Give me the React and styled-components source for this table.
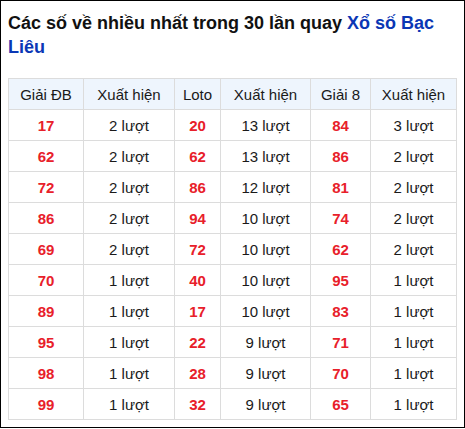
import styled, { createGlobalStyle } from 'styled-components';

const GlobalStyle = createGlobalStyle`
  html, body {
    margin: 0;
    padding: 0;
    background: #fff;
  }
`;

const Box = styled.div`
  box-sizing: border-box;
  width: 465px;
  height: 428px;
  border: 1px solid #000;
  padding: 0 7px;
  font-family: "Liberation Sans", Arial, sans-serif;
`;

const Title = styled.h2`
  margin: 0;
  padding: 10px 0 0;
  font-size: 18px;
  line-height: 24px;
  font-weight: bold;
  color: #111;
  a {
    color: #0b37b5;
    text-decoration: none;
  }
`;

const Table = styled.table`
  width: 100%;
  margin-top: 19px;
  border-collapse: collapse;
  table-layout: fixed;
  font-size: 15px;
  color: #1a1a1a;

  th,
  td {
    border: 1px solid #dcdcdc;
    height: 30px;
    padding: 0;
    text-align: center;
  }
  th {
    background: #eef5fd;
    font-weight: normal;
  }
`;

const Col = styled.col`
  width: ${(p) => p.$w}px;
`;

const Num = styled.td`
  color: #e8202a;
  font-weight: bold;
`;

const widths = [75, 91, 46, 90, 60, 86];
const heads = ['Giải ĐB', 'Xuất hiện', 'Loto', 'Xuất hiện', 'Giải 8', 'Xuất hiện'];

const rows = [
  ['17', '2', '20', '13', '84', '3'],
  ['62', '2', '62', '13', '86', '2'],
  ['72', '2', '86', '12', '81', '2'],
  ['86', '2', '94', '10', '74', '2'],
  ['69', '2', '72', '10', '62', '2'],
  ['70', '1', '40', '10', '95', '1'],
  ['89', '1', '17', '10', '83', '1'],
  ['95', '1', '22', '9', '71', '1'],
  ['98', '1', '28', '9', '70', '1'],
  ['99', '1', '32', '9', '65', '1'],
];

export default function App() {
  return (
    <>
      <GlobalStyle />
      <Box>
        <Title>
          Các số về nhiều nhất trong 30 lần quay <a href="#">Xổ số Bạc Liêu</a>
        </Title>
        <Table>
          <colgroup>
            {widths.map((w, i) => (
              <Col key={i} $w={w} />
            ))}
          </colgroup>
          <thead>
            <tr>
              {heads.map((h, i) => (
                <th key={i}>{h}</th>
              ))}
            </tr>
          </thead>
          <tbody>
            {rows.map((r, i) => (
              <tr key={i}>
                <Num>{r[0]}</Num>
                <td>{r[1]} lượt</td>
                <Num>{r[2]}</Num>
                <td>{r[3]} lượt</td>
                <Num>{r[4]}</Num>
                <td>{r[5]} lượt</td>
              </tr>
            ))}
          </tbody>
        </Table>
      </Box>
    </>
  );
}
